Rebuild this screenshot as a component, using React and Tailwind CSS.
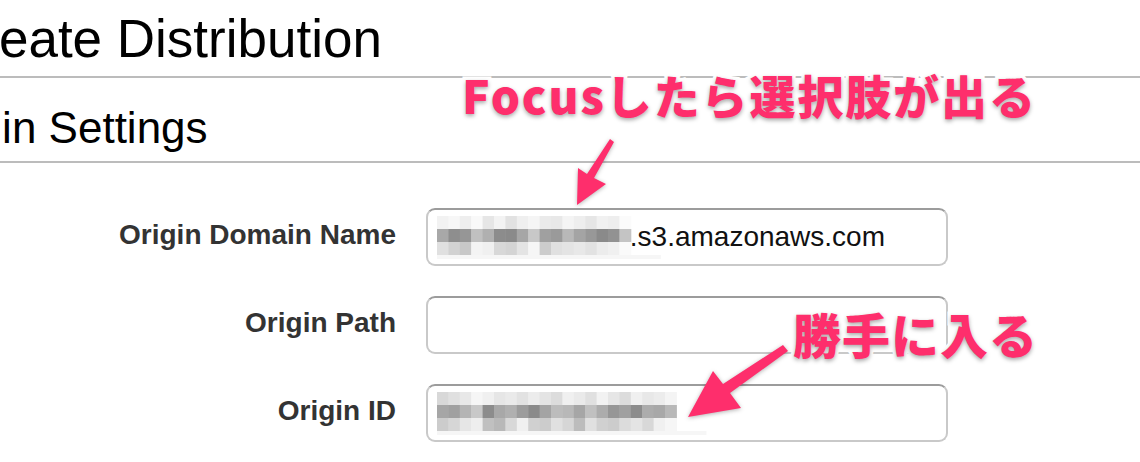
import React from "react";

const blurA = [
  ["f2", "f7", "ee", "f9", "e6", "f3", "e2", "ef", "f5", "ea", "e8", "f4", "ee", "e6", "f1", "ee", "fb"],
  ["a8", "8e", "96", "c0", "b0", "8c", "8a", "a6", "c8", "a0", "9a", "b8", "a4", "98", "8a", "92", "c4"],
  ["e0", "d2", "c8", "f4", "f0", "d8", "d4", "e4", "f6", "cc", "e0", "e4", "e8", "e2", "ec", "f0", "fa"],
];

const blurB = [
  ["d8", "e0", "e8", "f6", "f0", "e6", "ea", "e2", "ec", "e4", "dc", "f0", "ea", "e0", "f2", "e6", "dc", "f0", "e8", "ec", "f4"],
  ["a6", "a0", "b4", "c8", "8c", "a8", "b0", "9c", "8a", "a4", "bc", "b8", "a6", "c0", "ac", "96", "a0", "8c", "ac", "a8", "b8"],
  ["cc", "d6", "e6", "ee", "c0", "b8", "d8", "f0", "d0", "cc", "e0", "d6", "bc", "e0", "d0", "cc", "dc", "e4", "d8", "f0", "f6"],
];

// モザイク（ぼかした文字）
function Mosaic({ rows, cell = 11.4, rowH = 13 }) {
  const w = rows[0].length * cell;
  return (
    <svg width={w + 32} height={rows.length * rowH + 4} className="block shrink-0">
      {rows.map((row, r) =>
        row.map((c, i) => (
          <rect
            key={r + "-" + i}
            x={i * cell}
            y={r * rowH}
            width={cell + 0.5}
            height={rowH + 0.5}
            fill={"#" + c + c.slice(0, 2) + c.slice(0, 2)}
          />
        ))
      )}
      <rect x={0} y={rows.length * rowH} width={w + 30} height={4} fill="#f6f6f6" />
    </svg>
  );
}

function Row({ label, children }) {
  return (
    <div className="flex items-center gap-[30px]">
      <div className="w-[396px] pb-[5px] text-right text-[28px] font-bold text-[#333]">{label}</div>
      <div className="w-[522px] h-[58px] rounded-[9px] border-2 border-[#c9c9c9] border-t-[#9c9c9c] bg-white flex items-center pl-[9px] overflow-hidden">
        {children}
      </div>
    </div>
  );
}

export default function App() {
  const note =
    "absolute whitespace-nowrap font-black text-[#fe2e6c] leading-none [-webkit-text-stroke:7px_white] [paint-order:stroke_fill] [text-shadow:0_2px_4px_rgba(0,0,0,0.35)]";

  return (
    <div
      className="relative w-[1140px] h-[462px] overflow-hidden bg-white"
      style={{ fontFamily: '"Liberation Sans", Arial, sans-serif' }}
    >
      {/* 見出し */}
      <div className="h-[78px] pt-[12px] border-b-2 border-[#bcbcbc]">
        <div className="ml-[-57px] text-[53px] leading-none text-black whitespace-nowrap">
          Create Distribution
        </div>
      </div>
      <div className="h-[85px] pt-[28px] border-b-2 border-[#bcbcbc]">
        <div className="ml-[-81px] text-[44px] leading-none text-black whitespace-nowrap">
          Origin Settings
        </div>
      </div>

      {/* フォーム */}
      <div className="mt-[45px] flex flex-col gap-[30px]">
        <Row label="Origin Domain Name">
          <Mosaic rows={blurA} />
          <span className="ml-[-33px] text-[28px] text-[#111] whitespace-nowrap">.s3.amazonaws.com</span>
        </Row>
        <Row label="Origin Path" />
        <Row label="Origin ID">
          <Mosaic rows={blurB} />
        </Row>
      </div>

      {/* 注釈 */}
      <div
        className={note + " left-[462px] top-[71px] text-[46px] tracking-[1.9px]"}
        style={{ fontFamily: '"Noto Sans CJK JP", sans-serif' }}
      >
        Focusしたら選択肢が出る
      </div>
      <div
        className={note + " left-[793px] top-[309px] text-[48px] tracking-[1px]"}
        style={{ fontFamily: '"Noto Sans CJK JP", sans-serif' }}
      >
        勝手に入る
      </div>

      <svg
        width="1140"
        height="462"
        className="absolute left-0 top-0 pointer-events-none [filter:drop-shadow(0_1px_2px_rgba(0,0,0,0.3))]"
      >
        <polygon
          points="610,139 614,142 594,178 606,184 577,205 578,168 587,174"
          fill="#fe2e6c"
        />
        <polygon
          points="783,345 788,351 730,393 741,408 688,417 713,371 723,384"
          fill="#fe2e6c"
        />
      </svg>
    </div>
  );
}
